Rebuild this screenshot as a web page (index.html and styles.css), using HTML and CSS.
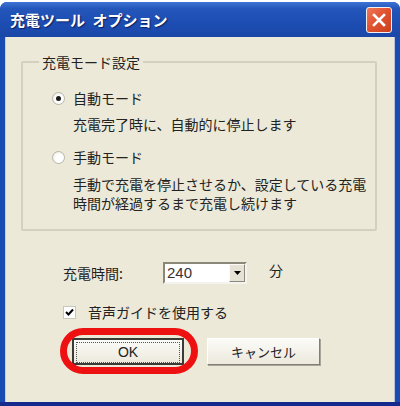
FILE: index.html
```html
<!DOCTYPE html>
<html lang="ja">
<head>
  <meta charset="UTF-8">
  <title>充電ツール オプション</title>
  <link rel="stylesheet" href="styles.css">
</head>
<body>
  <div class="window">
    <!-- Title bar -->
    <div class="titlebar">
      <span class="title">充電ツール オプション</span>
      <span class="close">
        <svg width="14" height="14" viewBox="0 0 14 14">
          <path d="M2 2 L12 12 M12 2 L2 12" stroke="#fff" stroke-width="2.6" stroke-linecap="square"/>
        </svg>
      </span>
    </div>

    <div class="client">
      <!-- Charge mode group -->
      <fieldset class="group">
        <legend>充電モード設定</legend>
        <div class="option">
          <span class="radio checked"></span>
          <span>自動モード</span>
        </div>
        <p class="desc desc-auto">充電完了時に、自動的に停止します</p>
        <div class="option option-manual">
          <span class="radio"></span>
          <span>手動モード</span>
        </div>
        <p class="desc desc-manual">手動で充電を停止させるか、設定している充電<br>時間が経過するまで充電し続けます</p>
      </fieldset>

      <!-- Charge time -->
      <div class="time-row">
        <span class="time-label">充電時間:</span>
        <span class="combo">
          <span class="combo-value">240</span>
          <span class="combo-btn">
            <svg width="7" height="4" viewBox="0 0 7 4"><path d="M0 0 H7 L3.5 4 Z" fill="#000"/></svg>
          </span>
        </span>
        <span class="unit">分</span>
      </div>

      <!-- Voice guide -->
      <div class="check-row">
        <span class="checkbox">
          <svg width="9" height="9" viewBox="0 0 9 9"><path d="M1 4 L3.5 6.5 L8 1.5" fill="none" stroke="#000" stroke-width="2"/></svg>
        </span>
        <span>音声ガイドを使用する</span>
      </div>

      <!-- Buttons -->
      <div class="buttons">
        <button class="btn btn-ok">
          <span class="focus">OK</span>
          <span class="ring"></span>
        </button>
        <button class="btn">キャンセル</button>
      </div>
    </div>
  </div>
</body>
</html>
```

FILE: styles.css
```css
/* Page */
body, html {
  margin: 0;
  padding: 0;
  background-color: #fff;
}

body {
  width: 400px;
  height: 406px;
  overflow: hidden;
  font-family: "Noto Sans CJK JP", "Noto Sans", sans-serif;
  font-size: 14px;
  color: #222;
}

/* Window frame */
.window {
  margin-top: 2px;
  height: 404px;
  display: flex;
  flex-direction: column;
  background: #1a4bb0;
  border-radius: 7px 7px 0 0;
  border-bottom: 4px solid #16298c;
  box-sizing: border-box;
}

.titlebar {
  height: 35px;
  display: flex;
  align-items: center;
  justify-content: space-between;
  padding: 0 8px 0 10px;
  border-radius: 7px 7px 0 0;
  background: linear-gradient(#3f74d6 0%, #2457bb 18%, #1d4db2 60%, #1a47a8 100%);
}

.title {
  color: #fff;
  font-weight: bold;
  font-size: 15px;
  word-spacing: 4px;
  text-shadow: 1px 1px 1px #0b1f60;
}

.close {
  width: 24px;
  height: 24px;
  display: flex;
  align-items: center;
  justify-content: center;
  border: 1px solid #f2f2f2;
  border-radius: 3px;
  background: linear-gradient(135deg, #f07858 0%, #e0502e 50%, #c8401e 100%);
}

.client {
  flex: 1;
  margin: 0 5px 0 5px;
  background: #ece9d8;
  border-left: 1px solid #c6cfe0;
  border-right: 1px solid #b9c2d6;
  padding: 0 17px 0 15px;
  box-sizing: border-box;
}

/* Group box */
.group {
  margin: 15px 0 0 0;
  padding: 16px 0 16px 29px;
  border: 2px solid #d3d0c0;
  border-radius: 2px;
}

.group legend {
  padding: 0 3px;
  margin-left: -13px;
  line-height: 20px;
}

.option {
  display: flex;
  align-items: center;
  gap: 8px;
  line-height: 20px;
}

.option-manual {
  margin-top: 13px;
}

.radio {
  width: 11px;
  height: 11px;
  border: 1px solid #b8b6aa;
  border-radius: 50%;
  background: radial-gradient(circle at 60% 60%, #fff 40%, #e6e4da 100%);
  display: flex;
  align-items: center;
  justify-content: center;
}

.radio.checked::after {
  content: "";
  width: 5px;
  height: 5px;
  border-radius: 50%;
  background: #1a1a1a;
}

.desc {
  margin: 0 0 0 21px;
  line-height: 19px;
  white-space: nowrap;
}

.desc-auto {
  margin-top: 7px;
}

.desc-manual {
  margin-top: 8px;
}

/* Charge time */
.time-row {
  display: flex;
  align-items: center;
  margin: 31px 0 0 42px;
  height: 22px;
}

.time-label {
  width: 100px;
}

.combo {
  width: 84px;
  height: 22px;
  box-sizing: border-box;
  display: flex;
  background: #fff;
  border: 2px solid;
  border-color: #8a8878 #f4f3ee #f4f3ee #8a8878;
}

.combo-value {
  flex: 1;
  padding-left: 2px;
  line-height: 18px;
  font-family: "Liberation Sans", Arial, sans-serif;
  font-size: 15px;
  color: #333;
}

.combo-btn {
  width: 14px;
  display: flex;
  align-items: center;
  justify-content: center;
  background: #e6e3d6;
  border: 1px solid;
  border-color: #fbfaf6 #8c8a7c #8c8a7c #fbfaf6;
}

.unit {
  margin-left: 22px;
  margin-top: -6px;
}

/* Checkbox */
.check-row {
  display: flex;
  align-items: center;
  gap: 12px;
  margin: 18px 0 0 42px;
  line-height: 20px;
}

.checkbox {
  width: 11px;
  height: 11px;
  border: 1px solid #c9c7ba;
  background: #fff;
  display: flex;
  align-items: center;
  justify-content: center;
}

/* Buttons */
.buttons {
  display: flex;
  gap: 23px;
  margin: 16px 0 0 51px;
}

.btn {
  position: relative;
  width: 113px;
  height: 27px;
  padding: 0;
  font-family: "Noto Sans CJK JP", "Noto Sans", sans-serif;
  font-size: 13px;
  color: #222;
  background: linear-gradient(#fbfbf8, #ece9dc);
  border: 1px solid;
  border-color: #fff #808078 #808078 #fff;
  box-shadow: 1px 1px 0 #a8a69a;
}

.btn-ok {
  width: 112px;
  border: 2px solid #3a3a36;
  box-shadow: none;
}

.focus {
  display: block;
  margin: 2px;
  height: 19px;
  line-height: 19px;
  border: 1px dotted #555;
  font-family: "Liberation Sans", Arial, sans-serif;
  font-size: 14px;
}

/* Red highlight around OK */
.ring {
  position: absolute;
  left: -14px;
  right: -16px;
  top: -12px;
  bottom: -11px;
  border: 7px solid #ee1111;
  border-radius: 26px;
}
```
